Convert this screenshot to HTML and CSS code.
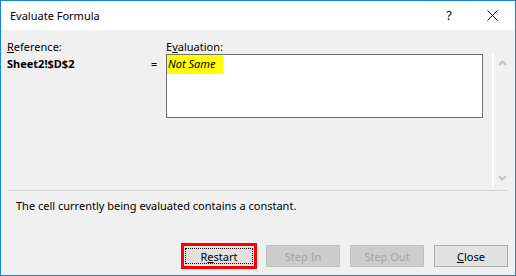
FILE: index.html
```html
<!DOCTYPE html>
<html lang="en">
<head>
  <meta charset="UTF-8">
  <title>Evaluate Formula</title>
  <link rel="stylesheet" href="styles.css">
</head>
<body>
  <div class="window">
    <!-- Titelbalk -->
    <div class="titlebar">
      <span class="title">Evaluate Formula</span>
      <span class="help">?</span>
      <svg class="close-x" width="11" height="11" viewBox="0 0 11 11">
        <path d="M0.5 0.5 L10.5 10.5 M10.5 0.5 L0.5 10.5" stroke="#000" stroke-width="1"/>
      </svg>
    </div>

    <div class="content">
      <div class="main">
        <div class="label"><u>R</u>eference:</div>
        <div></div>
        <div class="label">E<u>v</u>aluation:</div>
        <div></div>

        <div class="ref-value">Sheet2!$D$2</div>
        <div class="eq">=</div>
        <div class="evalbox"><span class="hl">Not Same</span></div>
        <div class="scroll">
          <svg width="9" height="6" viewBox="0 0 9 6"><path d="M1 5 L4.5 1.5 L8 5" fill="none" stroke="#c4c4c4" stroke-width="2"/></svg>
          <svg width="9" height="6" viewBox="0 0 9 6"><path d="M1 1 L4.5 4.5 L8 1" fill="none" stroke="#c4c4c4" stroke-width="2"/></svg>
        </div>
      </div>

      <hr>

      <p class="status">The cell currently being evaluated contains a constant.</p>

      <div class="buttons">
        <button class="btn marked"><span class="focus"><span>R<u>e</u>start</span></span></button>
        <button class="btn" disabled><span>Step <u>I</u>n</span></button>
        <button class="btn" disabled><span>Step <u>O</u>ut</span></button>
        <button class="btn"><span><u>C</u>lose</span></button>
      </div>
    </div>
  </div>
</body>
</html>
```

FILE: styles.css
```css
body {
  margin: 0;
  padding: 0;
  font-family: "Noto Sans", Arial, sans-serif;
  font-size: 11px;
  color: #000000;
}
.window {
  width: 514px;
  height: 274px;
  border: 1px solid #1883d7;
  background-color: #f0f0f0;
  display: flex;
  flex-direction: column;
}
.titlebar {
  height: 29px;
  background-color: #ffffff;
  display: flex;
  align-items: center;
  padding-left: 9px;
  padding-right: 17px;
}
.title {
  flex: 1;
  font-size: 11px;
}
.help {
  font-size: 13px;
  margin-right: 35px;
  margin-top: -1px;
}
.content {
  flex: 1;
  display: flex;
  flex-direction: column;
  padding: 9px 7px 8px 6px;
}
.main {
  display: grid;
  grid-template-columns: 143px 16px 317px 25px;
  grid-template-rows: 15px 132px;
}
.label {
  line-height: 15px;
}
.ref-value {
  font-weight: bold;
  line-height: 16px;
  padding-top: 2px;
}
.eq {
  line-height: 16px;
  padding-top: 2px;
  padding-left: 1px;
}
.evalbox {
  height: 62px;
  border: 1px solid #6e6e6e;
  background-color: #ffffff;
}
.hl {
  display: inline-block;
  background-color: #ffff00;
  font-style: italic;
  padding: 1px 8px 2px 1px;
  line-height: 16px;
}
.scroll {
  margin-left: 9px;
  border-left: 2px solid #ffffff;
  display: flex;
  flex-direction: column;
  justify-content: space-between;
  align-items: center;
  padding: 6px 0 5px 3px;
}
hr {
  border: 0;
  height: 1px;
  background-color: #d7d7d7;
  margin: 4px 0 0 0;
}
.status {
  margin: 8px 0 0 9px;
  line-height: 14px;
}
.buttons {
  margin-top: auto;
  display: flex;
  justify-content: flex-end;
  gap: 10px;
}
.btn {
  position: relative;
  width: 74px;
  height: 22px;
  font-family: "Noto Sans", Arial, sans-serif;
  font-size: 11px;
  color: #000000;
  background-color: #e1e1e1;
  border: 1px solid #adadad;
  padding: 0;
  display: flex;
  align-items: center;
  justify-content: center;
}
.btn:disabled {
  background-color: #cccccc;
  border-color: #bfbfbf;
  color: #a3a3a3;
}
.btn:disabled u {
  text-decoration: none;
}
.focus {
  flex: 1;
  align-self: stretch;
  margin: 2px;
  border: 1px dotted #000000;
  display: flex;
  align-items: center;
  justify-content: center;
}
/* Rood kader rond de knop */
.marked::after {
  content: "";
  position: absolute;
  left: -2px;
  right: -2px;
  top: -3px;
  bottom: -3px;
  border: 3px solid #ff0000;
}
```
